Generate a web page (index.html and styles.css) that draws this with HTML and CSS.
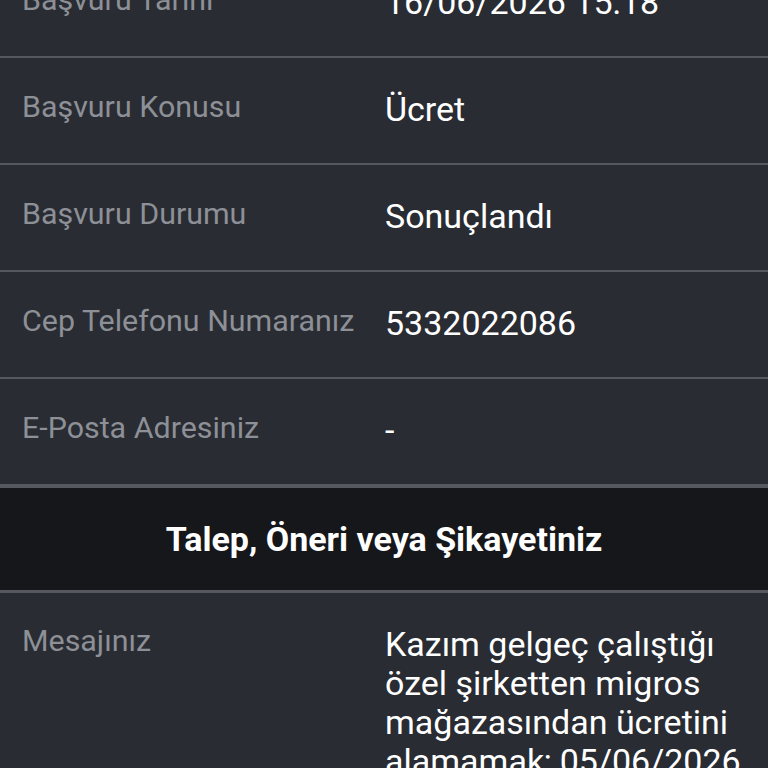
FILE: index.html
```html
<!DOCTYPE html>
<html lang="tr">
<head>
<meta charset="utf-8">
<link rel="stylesheet" href="styles.css">
</head>
<body>
<div class="page">
  <div class="list">
    <div class="row">
      <div class="label">Başvuru Tarihi</div>
      <div class="value">16/06/2026 15:18</div>
    </div>
    <div class="row">
      <div class="label">Başvuru Konusu</div>
      <div class="value">Ücret</div>
    </div>
    <div class="row">
      <div class="label">Başvuru Durumu</div>
      <div class="value">Sonuçlandı</div>
    </div>
    <div class="row">
      <div class="label">Cep Telefonu Numaranız</div>
      <div class="value">5332022086</div>
    </div>
    <div class="row">
      <div class="label">E-Posta Adresiniz</div>
      <div class="value">-</div>
    </div>
  </div>
  <div class="section-head">Talep, Öneri veya Şikayetiniz</div>
  <div class="row row-message">
    <div class="label">Mesajınız</div>
    <div class="value">Kazım gelgeç çalıştığı özel şirketten migros mağazasından ücretini alamamak; 05/06/2026 tarihinde başvuru yapılmıştır.</div>
  </div>
</div>
</body>
</html>
```
FILE: styles.css
```css
html, body {
  margin: 0;
  padding: 0;
  background: #292c33;
  overflow: hidden;
}
body {
  font-family: Roboto, "Noto Sans", sans-serif;
  width: 768px;
  height: 768px;
}
.page {
  margin-top: -49px;
}
.row {
  display: flex;
  align-items: center;
  height: 105px;
  border-bottom: 2px solid #55585f;
  background: #292c33;
}
.label {
  width: 363px;
  padding-left: 22px;
  flex: none;
  font-size: 30.4px;
  color: #8d9096;
  margin-top: -9px;
}
.value {
  flex: 1;
  padding-right: 14px;
  font-size: 34px;
  color: #ffffff;
  margin-top: -3px;
}
.section-head {
  background: #16171a;
  border-top: 2px solid #55585f;
  border-bottom: 3px solid #55585f;
  height: 102px;
  display: flex;
  align-items: center;
  justify-content: center;
  color: #ffffff;
  font-weight: 700;
  font-size: 34px;
}
.row-message {
  height: auto;
  align-items: flex-start;
  padding-top: 32px;
  border-bottom: none;
}
.row-message .label {
  margin-top: -2px;
}
.row-message .value {
  margin-top: 0;
  line-height: 39px;
}
```
